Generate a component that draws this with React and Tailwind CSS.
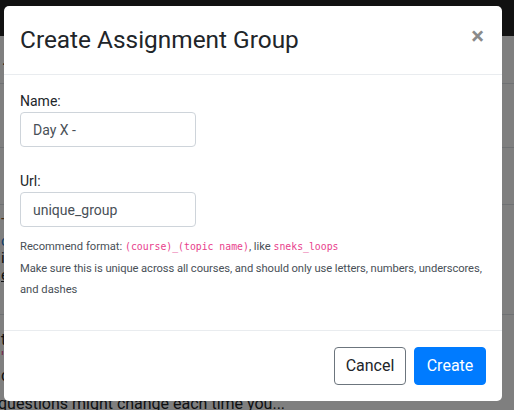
export default function App() {
  const font = { fontFamily: 'Roboto, "Noto Sans", sans-serif' };
  const mono = { fontFamily: '"DejaVu Sans Mono", "Liberation Mono", monospace' };
  return (
    <div className="relative w-[514px] h-[410px] overflow-hidden bg-white text-[#212529]" style={font}>
      {/* background page */}
      <div className="h-[36px] bg-[#222222]" />
      <div className="flex flex-col">
        <div className="h-[48px] border-b border-[#dee2e6] pt-[12px] pl-[2px] text-[16px]">.</div>
        <div className="h-[64px] border-b border-[#dee2e6]" />
        <div className="h-[57px] border-b border-[#dee2e6]" />
        <div className="h-[110px] border-b border-[#dee2e6] pt-[11px] pl-[1px] text-[15px] leading-[17px]">
          <div className="text-[#8a5a2b]">T</div>
          <div className="text-[#1c7ed6]">c</div>
          <div>i</div>
          <div className="underline">e</div>
        </div>
        <div className="pt-[16px] pl-[1px] text-[16px] leading-[18px]">
          <div>t</div>
          <div className="text-[#e83e8c]">'</div>
          <div>c</div>
          <div className="ml-[-3px] mt-[10px]">questions might change each time you...</div>
        </div>
      </div>

      {/* backdrop */}
      <div className="absolute inset-0 bg-black/50" />

      {/* modal */}
      <div className="absolute left-[4px] top-[6px] w-[498px] bg-white rounded-[5px] flex flex-col">
        <div className="flex items-start justify-between px-[16px] py-[16px] border-b border-[#e9ecef]">
          <h4 className="text-[24.4px] leading-[36px] font-normal text-[#212529]">Create Assignment Group</h4>
          <button className="text-[24px] leading-[36px] font-semibold text-[#8a8a8a] -mt-[4px] mr-[2px]">×</button>
        </div>
        <div className="px-[16px] pt-[16px] pb-[29px] text-[14px] leading-[21px]">
          <label className="block text-[#212529]">Name:</label>
          <input
            readOnly
            value="Day X -"
            className="block w-[176px] h-[35px] px-[12px] border border-[#ced4da] rounded-[4px] text-[14px] text-[#495057] outline-none"
            style={font}
          />
          <label className="block mt-[24px] text-[#212529]">Url:</label>
          <input
            readOnly
            value="unique_group"
            className="block w-[176px] h-[35px] px-[12px] border border-[#ced4da] rounded-[4px] text-[14px] text-[#495057] outline-none"
            style={font}
          />
          <div className="mt-[9px] text-[11.2px] leading-[21.5px] text-[#495057]">
            <div>
              Recommend format:{" "}
              <code className="text-[#e83e8c] text-[9.8px]" style={mono}>
                (course)_(topic name)
              </code>
              , like{" "}
              <code className="text-[#e83e8c] text-[9.8px]" style={mono}>
                sneks_loops
              </code>
            </div>
            <div className="whitespace-nowrap tracking-[-0.08px]">
              Make sure this is unique across all courses, and should only use letters, numbers, underscores,
            </div>
            <div>and dashes</div>
          </div>
        </div>
        <div className="flex justify-end gap-[8px] px-[16px] py-[16px] border-t border-[#e9ecef]">
          <button className="h-[38px] w-[72px] rounded-[4px] border border-[#6c757d] text-[16px] text-[#212529] bg-white">
            Cancel
          </button>
          <button className="h-[38px] w-[72px] rounded-[4px] border border-[#007bff] bg-[#007bff] text-[16px] text-white">
            Create
          </button>
        </div>
      </div>
    </div>
  );
}
